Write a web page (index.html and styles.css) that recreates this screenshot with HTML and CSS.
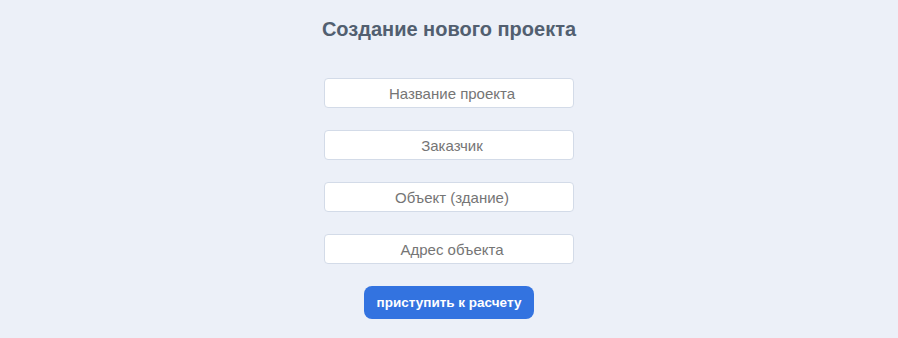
FILE: index.html
```html
<!DOCTYPE html>
<html lang="ru">
<head>
<meta charset="utf-8">
<link rel="stylesheet" href="styles.css">
</head>
<body>
<div class="page">
  <h1 class="title">Создание нового проекта</h1>
  <form class="form">
    <input class="field" type="text" placeholder="Название проекта">
    <input class="field" type="text" placeholder="Заказчик">
    <input class="field" type="text" placeholder="Объект (здание)">
    <input class="field" type="text" placeholder="Адрес объекта">
    <button class="btn" type="button">приступить к расчету</button>
  </form>
</div>
</body>
</html>
```
FILE: styles.css
```css
html, body {
  margin: 0;
  padding: 0;
  background: #ecf0f8;
  font-family: "Liberation Sans", Arial, sans-serif;
}
.page {
  display: flex;
  flex-direction: column;
  align-items: center;
  padding-top: 16px;
}
.title {
  margin: 0;
  font-size: 20px;
  line-height: 26px;
  font-weight: bold;
  color: #525f70;
}
.form {
  margin-top: 36px;
  display: flex;
  flex-direction: column;
  align-items: center;
  gap: 22px;
}
.field {
  box-sizing: border-box;
  width: 250px;
  height: 30px;
  border: 1px solid #d3dbe8;
  border-radius: 4px;
  background: #ffffff;
  font-family: "Liberation Sans", Arial, sans-serif;
  font-size: 15px;
  text-align: center;
  padding: 0 4px 0 10px;
  outline: none;
}
.field::placeholder {
  color: #757575;
}
.btn {
  width: 170px;
  height: 33px;
  border: none;
  border-radius: 8px;
  background: #3373e0;
  color: #ffffff;
  font-family: "Liberation Sans", Arial, sans-serif;
  font-size: 13.5px;
  font-weight: bold;
}
```
